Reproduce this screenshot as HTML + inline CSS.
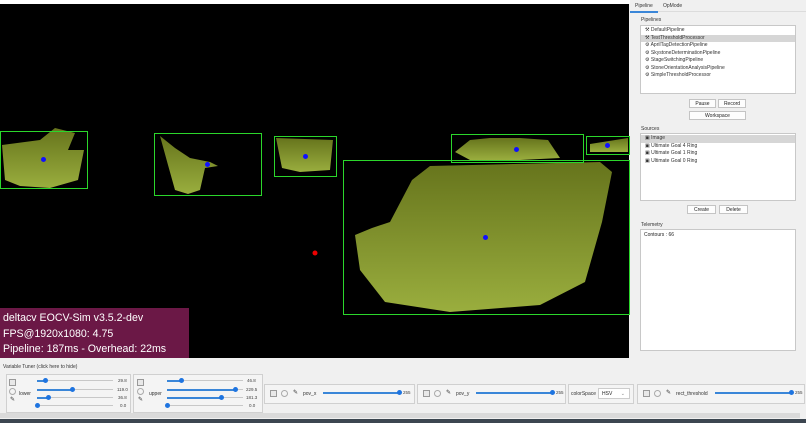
<!DOCTYPE html>
<html><head><meta charset="utf-8"><style>
*{box-sizing:border-box;margin:0;padding:0}
body{width:806px;height:423px;overflow:hidden;background:#f0f0f0;font-family:"Liberation Sans",sans-serif;position:relative;font-size:5px;color:#222}
.a{position:absolute}
.box{position:absolute;border:1.5px solid #2bd62b}
.dot{position:absolute;width:5px;height:5px;border-radius:50%;background:#1010ff}
.list{position:absolute;background:#fff;border:1px solid #c8c8c8}
.item{height:7.5px;line-height:7.5px;padding-left:4px;font-size:5px;color:#333;white-space:nowrap}
.sel{background:#d6d6d6}
.btn{position:absolute;background:#fdfdfd;border:1px solid #c4c4c4;font-size:5px;text-align:center;line-height:8px;color:#222}
.lbl{position:absolute;font-size:5px;color:#333}
.panel{position:absolute;background:#f4f4f4;border:1px solid #d0d0d0}
.trk{position:absolute;height:1px;background:#c8c8c8}
.fill{position:absolute;height:1.5px;background:#3a86d8}
.th{position:absolute;width:5px;height:5px;border-radius:50%;background:#1e74e0}
.val{position:absolute;font-size:4.5px;color:#444}
.ic{position:absolute;width:7px;height:7px;border:1px solid #999;background:#e8e8e8}
.ci{position:absolute;width:7px;height:7px;border:1px solid #aaa;border-radius:50%}
</style></head><body>
<div class="a" style="left:0;top:0;width:630px;height:4px;background:#fff"></div>
<div class="a" style="left:0;top:4px;width:629px;height:354px;background:#000"></div>
<svg class="a" style="left:0;top:0" width="630" height="358">
<defs><linearGradient id="g" x1="0" y1="0" x2="0" y2="1"><stop offset="0" stop-color="#66741c"/><stop offset="1" stop-color="#9aae3e"/></linearGradient></defs>
<path d="M2 145 L40 140 L55 128 L75 133 L68 150 L84 150 L78 180 L50 188 L20 186 L5 180Z" fill="url(#g)"/>
<path d="M160 136 L175 148 L190 158 L210 162 L218 166 L205 168 L200 190 L188 194 L175 190 L168 165Z" fill="url(#g)"/>
<path d="M276 138 L333 140 L330 170 L300 172 L282 168Z" fill="url(#g)"/>
<path d="M455 152 L470 140 L490 138 L520 138 L548 140 L560 158 L520 160 L470 160Z" fill="url(#g)"/>
<path d="M590 144 L628 138 L628 152 L590 152Z" fill="url(#g)"/>
<path d="M430 166 L600 162 L612 172 L602 222 L585 282 L540 305 L450 312 L385 302 L360 270 L355 235 L372 228 L390 222 L412 180Z" fill="url(#g)"/>
<circle cx="315" cy="253" r="2.5" fill="#e00"/>
</svg>
<div class="box" style="left:0;top:131px;width:88px;height:58px"></div><div class="dot" style="left:41px;top:157px"></div>
<div class="box" style="left:154px;top:133px;width:108px;height:63px"></div><div class="dot" style="left:205px;top:162px"></div>
<div class="box" style="left:274px;top:136px;width:63px;height:41px"></div><div class="dot" style="left:303px;top:154px"></div>
<div class="box" style="left:451px;top:134px;width:133px;height:29px"></div><div class="dot" style="left:514px;top:147px"></div>
<div class="box" style="left:586px;top:136px;width:44px;height:19px"></div><div class="dot" style="left:605px;top:143px"></div>
<div class="box" style="left:343px;top:160px;width:287px;height:155px"></div><div class="dot" style="left:483px;top:235px"></div>
<div class="a" style="left:0;top:308px;width:189px;height:50px;background:#6b1846;color:#fff;font-size:10.6px;line-height:15.5px;padding:3px 0 0 3px;white-space:nowrap">deltacv EOCV-Sim v3.5.2-dev<br>FPS@1920x1080: 4.75<br>Pipeline: 187ms - Overhead: 22ms</div>

<div class="a" style="left:630px;top:0;width:176px;height:360px;background:#f0f0f0"></div>
<div class="a" style="left:630px;top:11px;width:176px;height:1px;background:#dcdcdc"></div>
<div class="a" style="left:630px;top:11px;width:28px;height:1.5px;background:#3a86d8"></div>
<div class="lbl" style="left:635px;top:3px">Pipeline</div><div class="lbl" style="left:663px;top:3px">OpMode</div>
<div class="lbl" style="left:641px;top:17px">Pipelines</div>
<div class="list" style="left:640px;top:25px;width:156px;height:69px;padding-top:1px">
<div class="item">⚒ DefaultPipeline</div><div class="item sel">⚒ TestThresholdProcessor</div><div class="item">⚙ AprilTagDetectionPipeline</div><div class="item">⚙ SkystoneDeterminationPipeline</div><div class="item">⚙ StageSwitchingPipeline</div><div class="item">⚙ StoneOrientationAnalysisPipeline</div><div class="item">⚙ SimpleThresholdProcessor</div></div>
<div class="btn" style="left:689px;top:99px;width:27px;height:9px">Pause</div>
<div class="btn" style="left:718px;top:99px;width:28px;height:9px">Record</div>
<div class="btn" style="left:689px;top:111px;width:57px;height:9px">Workspace</div>
<div class="lbl" style="left:641px;top:126px">Sources</div>
<div class="list" style="left:640px;top:133px;width:156px;height:68px;padding-top:1px">
<div class="item sel">▣ Image</div><div class="item">▣ Ultimate Goal 4 Ring</div><div class="item">▣ Ultimate Goal 1 Ring</div><div class="item">▣ Ultimate Goal 0 Ring</div></div>
<div class="btn" style="left:687px;top:205px;width:29px;height:9px">Create</div>
<div class="btn" style="left:719px;top:205px;width:29px;height:9px">Delete</div>
<div class="lbl" style="left:641px;top:222px">Telemetry</div>
<div class="list" style="left:640px;top:229px;width:156px;height:122px;padding:2px 3px;font-size:5px">Contours : 66</div>

<div class="lbl" style="left:3px;top:364px">Variable Tuner (click here to hide)</div>
<div class="a" style="left:0;top:413px;width:800px;height:5px;background:#dadada"></div>
<div class="a" style="left:0;top:419px;width:806px;height:4px;background:#3c4650"></div>

<div class="panel" style="left:6px;top:374px;width:125px;height:39px"></div>
<div class="ic" style="left:9px;top:379px"></div><div class="ci" style="left:9px;top:388px"></div><div class="lbl" style="left:10px;top:396px;font-size:6px">✎</div>
<div class="lbl" style="left:19px;top:391px">lower</div>
<div class="panel" style="left:133px;top:374px;width:130px;height:39px"></div>
<div class="ic" style="left:137px;top:379px"></div><div class="ci" style="left:137px;top:388px"></div><div class="lbl" style="left:138px;top:396px;font-size:6px">✎</div>
<div class="lbl" style="left:149px;top:391px">upper</div>

<div class="panel" style="left:264px;top:384px;width:151px;height:20px"></div>
<div class="ic" style="left:270px;top:390px"></div><div class="ci" style="left:281px;top:390px"></div><div class="lbl" style="left:293px;top:389px;font-size:6px">✎</div><div class="lbl" style="left:303px;top:391px">pov_x</div>
<div class="panel" style="left:417px;top:384px;width:149px;height:20px"></div>
<div class="ic" style="left:423px;top:390px"></div><div class="ci" style="left:434px;top:390px"></div><div class="lbl" style="left:446px;top:389px;font-size:6px">✎</div><div class="lbl" style="left:456px;top:391px">pov_y</div>
<div class="panel" style="left:568px;top:384px;width:66px;height:20px"></div>
<div class="lbl" style="left:571px;top:391px">colorSpace</div>
<div class="a" style="left:598px;top:388px;width:32px;height:11px;background:#fff;border:1px solid #ccc;font-size:5px;padding:2px 0 0 3px">HSV<span style="position:absolute;right:4px;color:#888">⌄</span></div>
<div class="panel" style="left:637px;top:384px;width:168px;height:20px"></div>
<div class="ic" style="left:643px;top:390px"></div><div class="ci" style="left:654px;top:390px"></div><div class="lbl" style="left:666px;top:389px;font-size:6px">✎</div><div class="lbl" style="left:676px;top:391px">rect_threshold</div>

<div class="trk" style="left:37px;top:380px;width:76px"></div><div class="fill" style="left:37px;top:380px;width:8px"></div><div class="th" style="left:43px;top:378px"></div><div class="val" style="left:118px;top:378px">29.8</div>
<div class="trk" style="left:37px;top:389px;width:76px"></div><div class="fill" style="left:37px;top:389px;width:35px"></div><div class="th" style="left:70px;top:387px"></div><div class="val" style="left:117px;top:387px">119.0</div>
<div class="trk" style="left:37px;top:397px;width:76px"></div><div class="fill" style="left:37px;top:397px;width:11px"></div><div class="th" style="left:46px;top:395px"></div><div class="val" style="left:118px;top:395px">36.8</div>
<div class="trk" style="left:37px;top:405px;width:76px"></div><div class="th" style="left:35px;top:403px"></div><div class="val" style="left:120px;top:403px">0.0</div>

<div class="trk" style="left:167px;top:380px;width:76px"></div><div class="fill" style="left:167px;top:380px;width:14px"></div><div class="th" style="left:179px;top:378px"></div><div class="val" style="left:247px;top:378px">46.8</div>
<div class="trk" style="left:167px;top:389px;width:76px"></div><div class="fill" style="left:167px;top:389px;width:68px"></div><div class="th" style="left:233px;top:387px"></div><div class="val" style="left:246px;top:387px">229.5</div>
<div class="trk" style="left:167px;top:397px;width:76px"></div><div class="fill" style="left:167px;top:397px;width:54px"></div><div class="th" style="left:219px;top:395px"></div><div class="val" style="left:246px;top:395px">181.3</div>
<div class="trk" style="left:167px;top:405px;width:76px"></div><div class="th" style="left:165px;top:403px"></div><div class="val" style="left:249px;top:403px">0.0</div>

<div class="fill" style="left:323px;top:392px;width:76px"></div><div class="th" style="left:397px;top:390px"></div><div class="val" style="left:403px;top:390px">255</div>
<div class="fill" style="left:476px;top:392px;width:76px"></div><div class="th" style="left:550px;top:390px"></div><div class="val" style="left:556px;top:390px">255</div>
<div class="fill" style="left:715px;top:392px;width:76px"></div><div class="th" style="left:789px;top:390px"></div><div class="val" style="left:795px;top:390px">255</div>
</body></html>
